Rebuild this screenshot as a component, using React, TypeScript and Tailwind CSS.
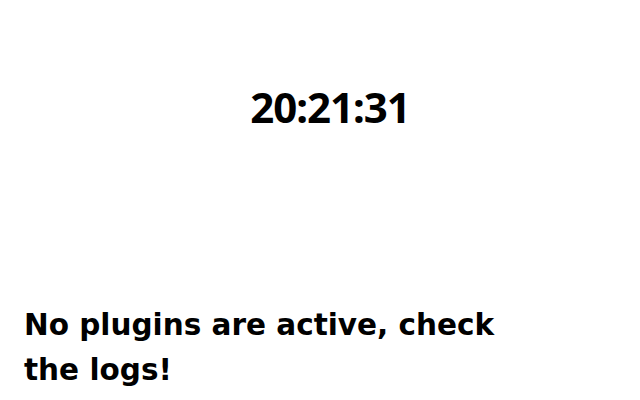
import React from 'react';

const App: React.FC = () => {
  return (
    <div className="w-[640px] h-[400px] bg-white text-black flex flex-col justify-between font-['Noto_Sans',sans-serif]">
      {/* Clock */}
      <div className="flex justify-center pt-[86px] pl-5">
        <span className="text-[42px] font-bold leading-none tracking-[-1px]">20:21:31</span>
      </div>

      {/* Status message */}
      <div className="px-6 pb-[7px]">
        <p className="w-[505px] text-[29.5px] font-bold leading-[45px] font-['DejaVu_Sans',sans-serif]">
          No plugins are active, check the logs!
        </p>
      </div>
    </div>
  );
};

export default App;
